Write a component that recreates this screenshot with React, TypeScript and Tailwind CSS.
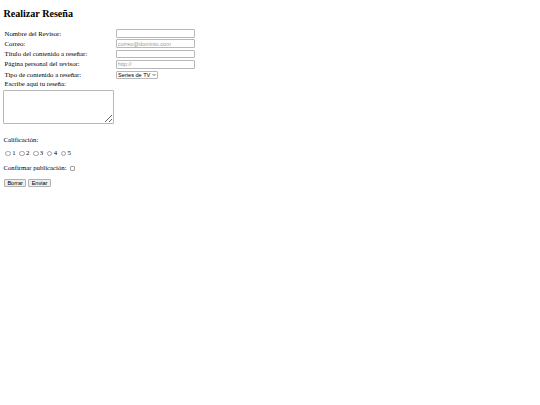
import { ChevronDown } from "lucide-react";

const fields = [
  { label: "Nombre del Revisor:", type: "text", placeholder: "" },
  { label: "Correo:", type: "email", placeholder: "correo@dominio.com" },
  { label: "Título del contenido a reseñar:", type: "text", placeholder: "" },
  { label: "Página personal del revisor:", type: "url", placeholder: "http://" },
];

const App = () => {
  return (
    <div className="min-h-screen bg-white px-[3.4px] pt-[8.4px] font-['Liberation_Serif',serif] text-[6.75px] leading-[7.8px] text-black">
      <h2 className="text-[10.1px] font-bold leading-[11.7px] mb-[8.6px]">Realizar Reseña</h2>

      <form>
        {/* datos del revisor */}
        <div className="grid grid-cols-[111px_auto] w-max gap-y-[0.8px] ml-[1.2px]">
          {fields.map((f, i) => (
            <div key={i} className="contents">
              <label className="flex items-center h-[9.5px]">{f.label}</label>
              <div className="flex items-center h-[9.5px]">
                <input
                  type={f.type}
                  placeholder={f.placeholder}
                  className="w-[79px] h-[8.6px] border border-[#b8b8b8] rounded-[1px] px-[1px] font-['Liberation_Sans',sans-serif] text-[5.6px] placeholder:text-[#9a9a9a] outline-none"
                />
              </div>
            </div>
          ))}
          <label className="flex items-center h-[9.5px]">Tipo de contenido a reseñar:</label>
          <div className="flex items-center h-[9.5px]">
            <div className="relative">
              <select className="appearance-none w-[42px] h-[8px] border border-[#b8b8b8] rounded-[1px] bg-white pl-[1.5px] font-['Liberation_Sans',sans-serif] text-[5.6px] leading-[6px] text-black outline-none">
                <option>Series de TV</option>
                <option>Películas</option>
                <option>Libros</option>
              </select>
              <ChevronDown className="absolute right-[2px] top-[2px] w-[4px] h-[4px] pointer-events-none" strokeWidth={4} />
            </div>
          </div>
          <label className="flex items-center h-[8.4px] col-span-2">Escribe aquí tu reseña:</label>
        </div>

        <textarea className="block w-[111px] h-[34px] mt-[1px] border border-[#b8b8b8] rounded-[1px] resize-y outline-none" />

        <p className="mt-[12px]">Calificación:</p>

        <div className="flex items-center gap-[1.7px] mt-[6px] h-[8px]">
          {[1, 2, 3, 4, 5].map((n) => (
            <label key={n} className="flex items-center">
              <input
                type="radio"
                name="calificacion"
                className="appearance-none w-[5.4px] h-[5.4px] ml-[2.1px] mr-[1.3px] rounded-full border-[0.6px] border-[#a0a0a0] bg-white"
              />
              <span>{n}</span>
            </label>
          ))}
        </div>

        <div className="flex items-center mt-[7px] h-[8px]">
          <span>Confirmar publicación:</span>
          <input
            type="checkbox"
            className="appearance-none w-[5.4px] h-[5.4px] ml-[3.5px] rounded-[1px] border-[0.6px] border-[#a0a0a0] bg-white"
          />
        </div>

        <div className="flex gap-[1.7px] mt-[6.5px] ml-[0.5px]">
          <button
            type="reset"
            className="h-[8px] px-[2.5px] border border-[#b0b0b0] rounded-[1px] bg-[#efefef] font-['Liberation_Sans',sans-serif] text-[5.6px] leading-[6px]"
          >
            Borrar
          </button>
          <button
            type="submit"
            className="h-[8px] px-[2.5px] border border-[#b0b0b0] rounded-[1px] bg-[#efefef] font-['Liberation_Sans',sans-serif] text-[5.6px] leading-[6px]"
          >
            Enviar
          </button>
        </div>
      </form>
    </div>
  );
};

export default App;
